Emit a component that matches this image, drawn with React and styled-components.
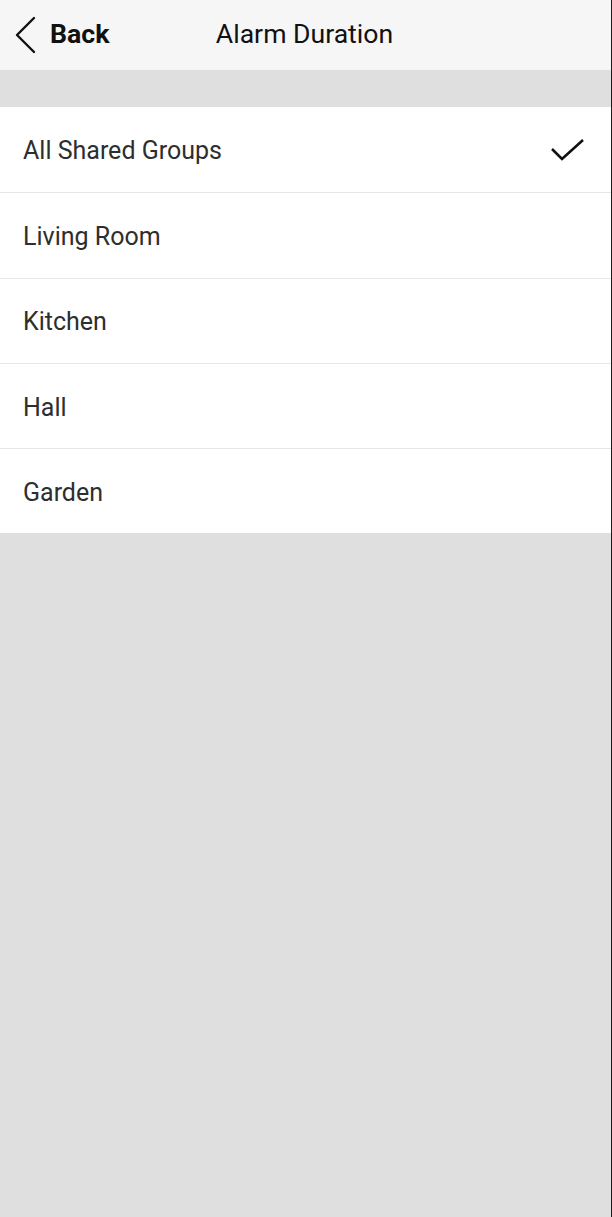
import React, { useState } from 'react';
import styled, { createGlobalStyle } from 'styled-components';

const GlobalStyle = createGlobalStyle`
  html, body {
    margin: 0;
    padding: 0;
    background: #dfdfdf;
  }

  body {
    font-family: Roboto, "Noto Sans", "Liberation Sans", sans-serif;
  }
`;

const Screen = styled.div`
  box-sizing: border-box;
  width: 612px;
  min-height: 1217px;
  background: #dfdfdf;
  border-right: 1px solid #1c1c1c;
  display: flex;
  flex-direction: column;
`;

const Header = styled.header`
  position: relative;
  box-sizing: border-box;
  height: 70px;
  padding-bottom: 4px;
  background: #f6f6f6;
  display: flex;
  align-items: center;
  justify-content: center;
`;

const BackButton = styled.button`
  position: absolute;
  left: 14px;
  top: 0;
  bottom: 0;
  display: flex;
  align-items: center;
  gap: 12px;
  padding: 0;
  border: none;
  background: none;
  font-family: inherit;
  font-size: 26.7px;
  font-weight: 700;
  color: #111;
  cursor: pointer;
`;

const BackLabel = styled.span`
  margin-bottom: 2px;
`;

const Title = styled.h1`
  margin: 0 0 0 -2px;
  font-size: 26.6px;
  font-weight: 400;
  color: #111;
`;

const Spacer = styled.div`
  height: 37px;
  background: #dfdfdf;
`;

const List = styled.ul`
  list-style: none;
  margin: 0;
  padding: 0;
  background: #fff;
`;

const Row = styled.li`
  box-sizing: border-box;
  height: 85.3px;
  display: flex;
  align-items: center;
  justify-content: space-between;
  padding: 2px 25px 0 23px;
  border-top: 1px solid #e6e6e6;
  font-size: 25px;
  color: #2e2e2e;
  cursor: pointer;

  &:first-child {
    border-top: none;
  }
`;

const Chevron = () => (
  <svg width="24" height="38" viewBox="0 0 24 38" fill="none">
    <path d="M20 2 L3 19 L20 36" stroke="#111" strokeWidth="2.4" strokeLinecap="round" strokeLinejoin="round" />
  </svg>
);

const Check = () => (
  <svg width="36" height="26" viewBox="0 0 36 26" fill="none">
    <path d="M2 11 L12 21 L33 2" stroke="#111" strokeWidth="2.6" strokeLinejoin="miter" />
  </svg>
);

const groups = ['All Shared Groups', 'Living Room', 'Kitchen', 'Hall', 'Garden'];

const App = () => {
  const [selected, setSelected] = useState(groups[0]);

  return (
    <Screen>
      <GlobalStyle />
      <Header>
        <BackButton type="button">
          <Chevron />
          <BackLabel>Back</BackLabel>
        </BackButton>
        <Title>Alarm Duration</Title>
      </Header>
      <Spacer />
      <List>
        {groups.map(group => (
          <Row key={group} onClick={() => setSelected(group)}>
            {group}
            {selected === group && <Check />}
          </Row>
        ))}
      </List>
    </Screen>
  );
};

export default App;
